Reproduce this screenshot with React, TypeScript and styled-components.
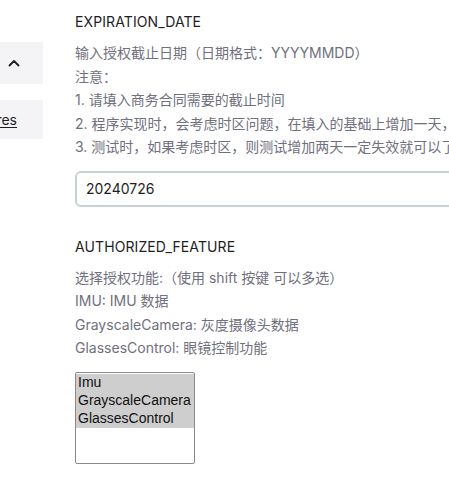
import React from "react";
import styled, { createGlobalStyle } from "styled-components";

const Global = createGlobalStyle`
  html, body { margin: 0; padding: 0; background: #ffffff; overflow: hidden; }
  body { font-family: Inter, "Noto Sans CJK SC", sans-serif; }
`;

const Page = styled.div`
  display: flex;
  align-items: flex-start;
  width: 449px;
  height: 480px;
  overflow: hidden;
`;

const Sidebar = styled.nav`
  flex: 0 0 43px;
  display: flex;
  flex-direction: column;
  align-items: flex-end;
  gap: 16px;
  padding-top: 42px;
  overflow: hidden;
`;

const NavItem = styled.div<{ $h: number; $pr: number }>`
  flex: 0 0 auto;
  width: 200px;
  height: ${(p) => p.$h}px;
  background: #f4f4f7;
  display: flex;
  align-items: center;
  justify-content: flex-end;
  padding-right: ${(p) => p.$pr}px;
  box-sizing: border-box;
`;

const NavLink = styled.a`
  font-size: 14px;
  color: #1e1e24;
  text-decoration: underline;
  text-underline-offset: 2px;
`;

const Main = styled.main`
  flex: 0 0 auto;
  width: 440px;
  margin-left: 32px;
  padding-top: 11px;
`;

const Field = styled.section`
  display: flex;
  flex-direction: column;
  margin-bottom: 29px;
`;

const Label = styled.h3`
  margin: 0 0 8px;
  font-size: 14px;
  font-weight: 400;
  color: #1e1e24;
  line-height: 22px;
  letter-spacing: 0.1px;
`;

const Help = styled.p`
  margin: 0 0 10px;
  font-size: 14px;
  line-height: 23.5px;
  color: #70707e;
  white-space: nowrap;
`;

const TextInput = styled.input`
  box-sizing: border-box;
  width: 440px;
  height: 36px;
  margin-top: 2px;
  border: 2px solid #c9d1d5;
  border-radius: 6px;
  padding: 0 9px;
  font-family: Inter, sans-serif;
  font-size: 14px;
  color: #1e1e24;
  outline: none;
`;

const MultiSelect = styled.select`
  box-sizing: border-box;
  width: 120px;
  height: 92px;
  margin-top: 2px;
  border: 1px solid #8a8a8a;
  border-radius: 2px;
  padding: 1px 0 0;
  font-family: "Liberation Sans", Arial, sans-serif;
  font-size: 14px;
  color: #111;
  outline: none;
  overflow: hidden;

  option {
    padding: 0 2px;
    line-height: 18px;
    height: 18px;
    background: #cecece;
    color: #111;
  }
`;

function Chevron() {
  return (
    <svg width="12" height="8" viewBox="0 0 12 8" fill="none">
      <path d="M1.5 6.5 L6 2 L10.5 6.5" stroke="#1e1e24" strokeWidth="1.8" strokeLinecap="round" strokeLinejoin="round" />
    </svg>
  );
}

export default function App() {
  return (
    <>
      <Global />
      <Page>
        <Sidebar>
          <NavItem $h={42} $pr={23}>
            <Chevron />
          </NavItem>
          <NavItem $h={39} $pr={26}>
            <NavLink>Features</NavLink>
          </NavItem>
        </Sidebar>
        <Main>
          <Field>
            <Label>EXPIRATION_DATE</Label>
            <Help>
              输入授权截止日期（日期格式：YYYYMMDD）
              <br />
              注意：
              <br />
              1. 请填入商务合同需要的截止时间
              <br />
              2. 程序实现时，会考虑时区问题，在填入的基础上增加一天，
              <br />
              3. 测试时，如果考虑时区，则测试增加两天一定失效就可以了
            </Help>
            <TextInput defaultValue="20240726" />
          </Field>
          <Field>
            <Label>AUTHORIZED_FEATURE</Label>
            <Help>
              选择授权功能:（使用 shift 按键 可以多选）
              <br />
              IMU: IMU 数据
              <br />
              GrayscaleCamera: 灰度摄像头数据
              <br />
              GlassesControl: 眼镜控制功能
            </Help>
            <MultiSelect multiple defaultValue={["Imu", "GrayscaleCamera", "GlassesControl"]}>
              <option value="Imu">Imu</option>
              <option value="GrayscaleCamera">GrayscaleCamera</option>
              <option value="GlassesControl">GlassesControl</option>
            </MultiSelect>
          </Field>
        </Main>
      </Page>
    </>
  );
}
